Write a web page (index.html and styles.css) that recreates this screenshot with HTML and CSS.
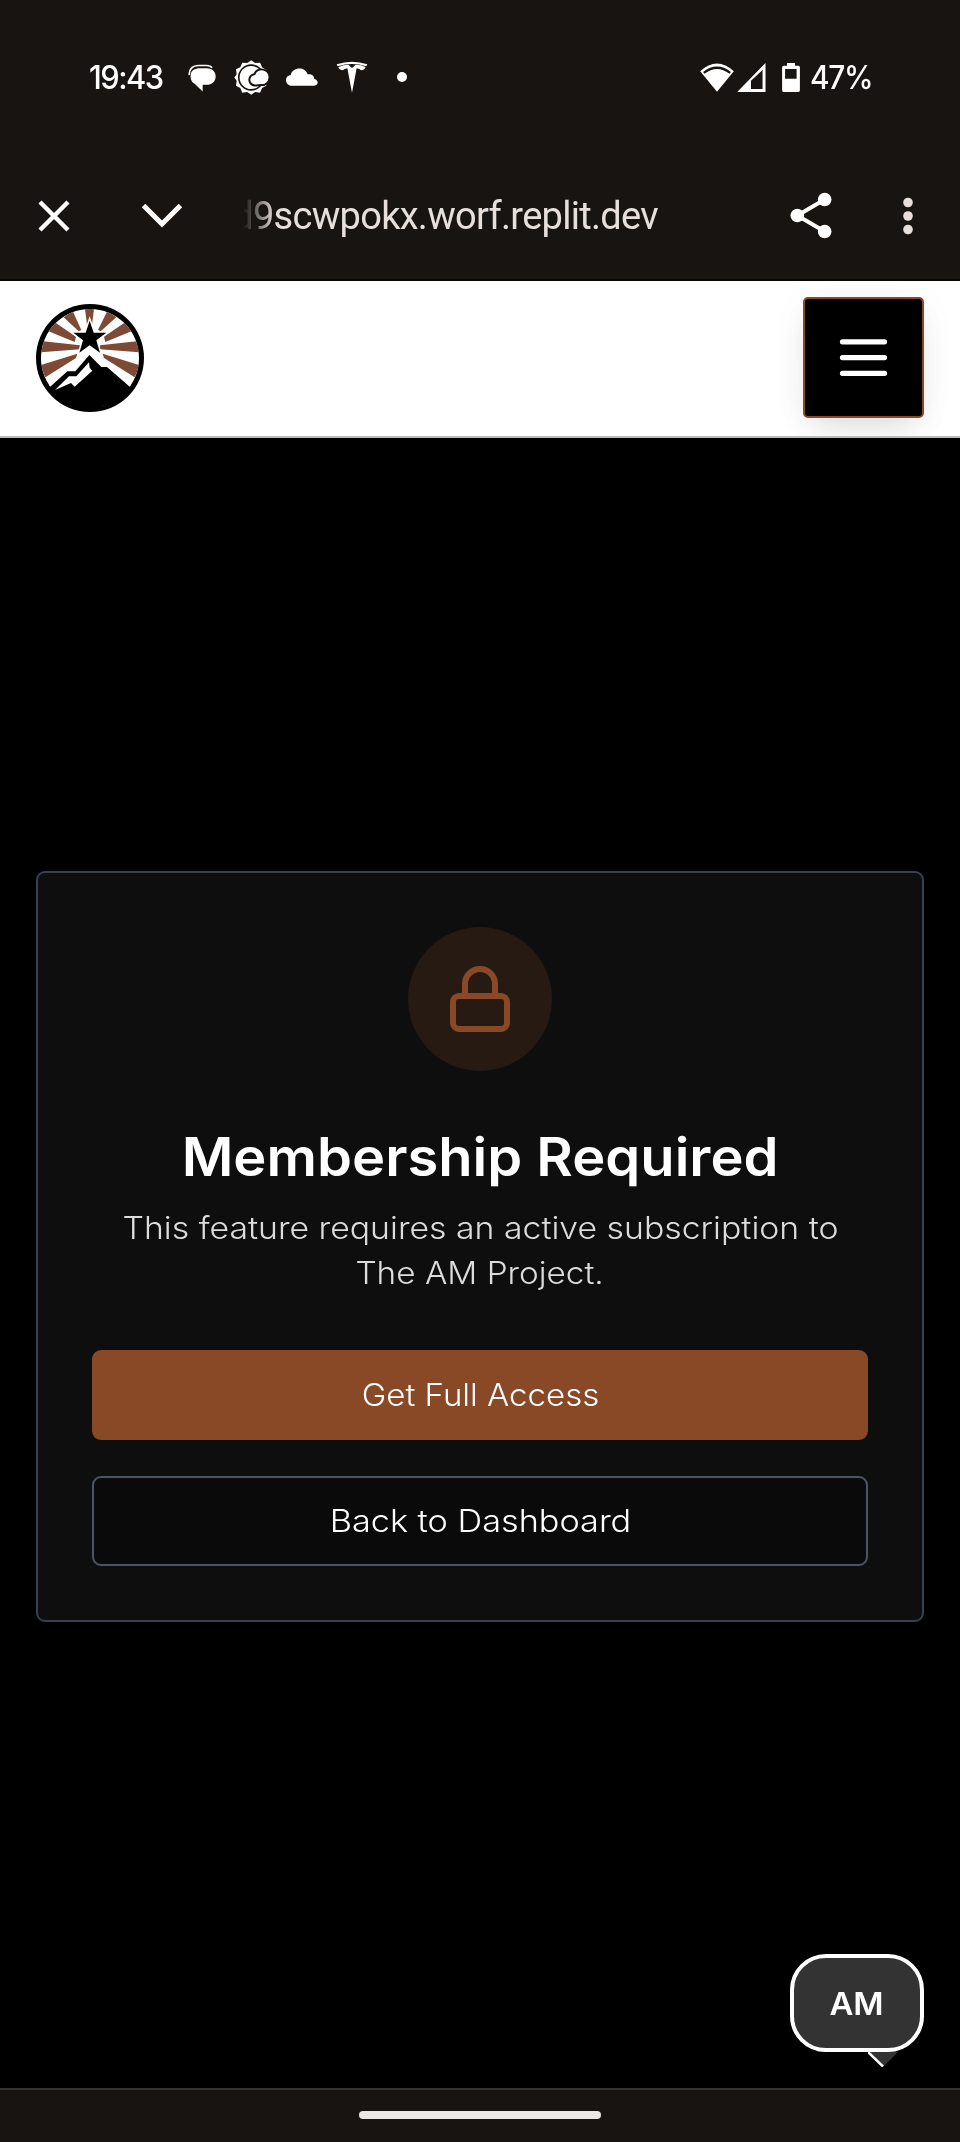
FILE: index.html
```html
<!DOCTYPE html>
<html lang="en">
<head>
<meta charset="utf-8">
<title>Membership Required</title>
<link rel="stylesheet" href="styles.css">
</head>
<body>
<div class="screen">
  <div class="status">
    <div class="status-left">
      <span class="clock">19:43</span>
      <svg class="i-msg" viewBox="384 72 84 86"><path fill="#fff" d="M428 157L404 134C394 128 391 118 392 108C392 94 404 87 420 87H440C456 87 467 97 467 111C467 127 456 137 440 137H428Z"/><path fill="none" stroke="#fff" stroke-width="5" d="M388 108C386 90 398 79 416 79H440Q452 79 456 86"/></svg>
      <svg class="i-weather" viewBox="523 61 106 106"><g fill="#fff"><path d="M575 62L587 70 602 69 608 83 621 91 619 106 626 114 619 124 621 139 608 146 602 160 587 158 575 166 563 158 548 160 542 146 529 139 531 124 524 114 531 104 529 89 542 83 548 69 563 70Z"/><circle cx="575" cy="114" r="40" fill="#171411"/><circle cx="575" cy="114" r="35"/><path stroke="#171411" stroke-width="6" d="M588 138A17 17 0 0 1 585 104Q590 90 607 90C622 90 630 101 630 113C630 126 621 137 607 137Z"/><path d="M588 134A14 14 0 0 1 588 107Q593 93 607 93C619 93 627 102 627 113C627 125 619 134 607 134Z"/></g></svg>
      <svg class="i-cloud" viewBox="678 82 96 54"><path fill="#fff" d="M696 135C673 135 673 104 692 104C696 79 735 76 743 101C757 99 763 107 763 115C777 118 776 135 762 135Z"/></svg>
      <svg class="i-tesla" viewBox="829 64 96 96"><g fill="#fff"><path d="M831 74Q877 59 923 74L920 80Q877 66 834 80Z"/><path d="M836 82Q852 75 866 75L877 85L888 75Q904 75 918 82Q914 92 904 92Q901 87 891 86L877 159L863 86Q853 87 850 92Q840 92 836 82Z"/></g></svg>
      <span class="more-dot"></span>
    </div>
    <div class="status-right">
      <svg class="i-wifi" viewBox="60 66 102 88"><path fill="#fff" d="M111 153L60 91Q111 44 162 91Z"/><path fill="none" stroke="#171411" stroke-width="7" d="M71 96Q111 65 151 96"/></svg>
      <svg class="i-signal" viewBox="171 67 87 88"><path fill="#fff" fill-rule="evenodd" d="M171 155L257 67V155ZM213 121V146H248V88Z"/></svg>
      <svg class="i-battery" viewBox="306 66 54 88"><path fill="#fff" fill-rule="evenodd" d="M321 66H345V74H355Q360 74 360 79V149Q360 154 355 154H311Q306 154 306 149V79Q306 74 311 74H321ZM315 84V114H350V84Z"/></svg>
      <span class="percent">47%</span>
    </div>
  </div>

  <div class="browser-bar">
    <svg class="i-close" viewBox="0 0 32 32"><path d="M2 2L30 30M30 2L2 30"/></svg>
    <svg class="i-down" viewBox="0 0 40 24"><path d="M1.500 1.500L20 20L38.500 1.500"/></svg>
    <div class="url"><span>d9scwpokx.worf.replit.dev</span></div>
    <svg class="i-share" viewBox="930 68 126 140"><g fill="#fff"><path d="M1034 90L952 138L1034 186" fill="none" stroke="#fff" stroke-width="12"/><circle cx="1034" cy="90" r="20.500"/><circle cx="952" cy="138" r="20.500"/><circle cx="1034" cy="186" r="20.500"/></g></svg>
    <svg class="i-kebab" viewBox="0 0 10 38"><circle cx="5" cy="5.500" r="4.800"/><circle cx="5" cy="19" r="4.800"/><circle cx="5" cy="32.500" r="4.800"/></svg>
  </div>

  <header class="site-header">
    <svg class="logo" viewBox="48 42 324 324">
      <defs><clipPath id="disc"><circle cx="210" cy="204" r="147"/></clipPath></defs>
      <circle cx="210" cy="204" r="162"/>
      <circle cx="210" cy="204" r="147" fill="#fff"/>
      <g clip-path="url(#disc)">
        <g fill="#7d4a35">
          <path d="M194 50H223L214 120H203Z"/>
          <path d="M131 82L158 63L184 120L176 124Z"/><path d="M289 82L262 63L234 120L242 124Z"/>
          <path d="M82 122L100 94L168 140L164 156Z"/><path d="M338 122L320 94L252 140L256 156Z"/>
          <path d="M60 187V153L180 166V178Z"/><path d="M360 187V153L240 166V178Z"/>
          <path d="M76 262L60 226L172 191L168 204Z"/><path d="M344 262L360 226L248 191L252 204Z"/>
        </g>
        <path d="M209 92L221 128H259L229 151L240 188L209 166L178 188L189 151L160 128H197Z" stroke="#fff" stroke-width="9"/>
        <path fill="#fff" d="M86 288L132 230L158 228L208 174L248 216L268 220L336 288L260 320H120Z"/>
        <path d="M209 92L221 128H259L229 151L240 188L209 166L178 188L189 151L160 128H197Z"/>
      </g>
      <path d="M84 296L142 244H166L208 195L244 231H261L336 296L300 330L210 360L110 330Z"/>
      <path fill="#fff" d="M105 300L147 259H169L207 217L209 233L217 242L164 290L153 279Z"/>
    </svg>
    <button class="menu" aria-label="Menu"><svg viewBox="0 0 24 24"><path d="M4 6h16M4 12h16M4 18h16"/></svg></button>
  </header>

  <main class="page">
    <section class="card">
      <div class="lock"><svg viewBox="0 0 24 24"><rect x="3" y="11" width="18" height="11" rx="2"/><path d="M7 11V7a5 5 0 0 1 10 0v4"/></svg></div>
      <h1 class="title">Membership Required</h1>
      <p class="desc"><span class="line-a">This feature requires an active subscription to</span><br><span class="line-b">The AM Project.</span></p>
      <button class="btn primary"><span>Get Full Access</span></button>
      <button class="btn outline"><span>Back to Dashboard</span></button>
    </section>
    <div class="bubble"><span>AM</span>
      <svg class="tail" viewBox="0 0 30 15"><path fill="#333" d="M0 0H30L15 15Z"/><path fill="none" stroke="#fff" stroke-width="2.500" d="M0 0L15 14.500"/></svg>
    </div>
  </main>

  <footer class="gesture"><span class="pill"></span></footer>
</div>
</body>
</html>
```
FILE: styles.css
```css
* { box-sizing: border-box; }
body { margin: 0; background: #000; font-family: Inter, "Liberation Sans", sans-serif; }
svg { display: block; flex: none; }
button { font: inherit; cursor: pointer; }
.screen { width: 960px; height: 2142px; display: flex; flex-direction: column; background: #000; overflow: hidden; }

.status { height: 154px; background: #171411; display: flex; justify-content: space-between; padding: 0 89px; color: #fff; }
.status-left, .status-right { display: flex; align-items: center; height: 154px; }
.clock, .percent { font: 500 32px/40px Inter, sans-serif; white-space: nowrap; padding-top: 1px; }
.clock { width: 74px; letter-spacing: -1.6px; transform: scaleX(.965); transform-origin: 0 50%; }
.percent { width: 61px; margin-left: 10px; letter-spacing: -1.4px; transform: scaleX(.93); transform-origin: 0 50%; }
.i-msg { width: 28px; height: 29px; margin-left: 25px; }
.i-weather { width: 35px; height: 35px; margin-left: 18px; }
.i-cloud { width: 32px; height: 18px; margin-left: 17px; }
.i-tesla { width: 32px; height: 32px; margin-left: 18px; }
.more-dot { width: 10px; height: 10px; border-radius: 50%; background: #fff; margin-left: 29px; }
.i-wifi { width: 34px; height: 29px; }
.i-signal { width: 29px; height: 29px; margin-left: 3px; }
.i-battery { width: 18px; height: 29px; margin-left: 16px; }

.browser-bar { height: 127px; background: #171411; border-bottom: 2px solid #080604; display: flex; align-items: center; padding: 0 47px 2px 38px; }
.i-close { width: 32px; height: 32px; fill: none; stroke: #fff; stroke-width: 4.4; }
.i-down { width: 40px; height: 24px; margin-left: 72px; fill: none; stroke: #fff; stroke-width: 5; }
.url { width: 415px; margin-left: 61px; display: flex; justify-content: flex-end; overflow: hidden; color: #e8dfdb; font: 400 38px/52px Roboto, sans-serif; letter-spacing: -.7px; white-space: nowrap; -webkit-mask-image: linear-gradient(90deg, transparent, #000 32px); mask-image: linear-gradient(90deg, transparent, #000 32px); }
.i-share { width: 42px; height: 47px; margin-left: 132px; }
.i-kebab { width: 10px; height: 38px; margin-left: 71px; fill: #e8dfdb; }

.site-header { height: 157px; background: #fff; border-bottom: 2px solid #bbb; display: flex; justify-content: space-between; align-items: center; padding: 0 36px 2px; overflow: hidden; }
.logo { width: 108px; height: 108px; }
.menu { width: 121px; height: 121px; padding: 0; background: #000; border: 2px solid #8a4926; border-radius: 5px; display: flex; align-items: center; justify-content: center; box-shadow: 0 15px 30px -9px rgba(0,0,0,.13), 0 4px 40px rgba(0,0,0,.04); }
.menu svg { width: 63px; height: 63px; fill: none; stroke: #fff; stroke-width: 2; stroke-linecap: round; }

.page { height: 1650px; position: relative; display: flex; align-items: center; padding: 0 36px; }
.card { width: 888px; height: 751px; margin-top: -33px; border: 2px solid #374151; border-radius: 9px; background: #0e0e0e; padding: 54px; display: flex; flex-direction: column; align-items: center; }
.lock { width: 144px; height: 144px; border-radius: 50%; background: #271a13; display: flex; align-items: center; justify-content: center; }
.lock svg { width: 72px; height: 72px; fill: none; stroke: #8a4926; stroke-width: 2; stroke-linecap: round; stroke-linejoin: round; }
.title { margin: 54px 0 0; height: 64px; color: #fff; font-weight: 600; font-size: 53px; line-height: 64px; white-space: nowrap; transform: scaleX(1.058); }
.desc { margin: 16px 0 0; color: #dcdcdc; text-align: center; font-size: 31px; font-weight: 300; line-height: 45px; white-space: nowrap; }
.desc span, .btn span, .bubble span { display: inline-block; }
.line-a { transform: scaleX(1.09); }
.line-b { transform: scaleX(1.074); }
.btn { width: 776px; height: 90px; flex: none; border-radius: 9px; color: #fff; font-size: 31px; font-weight: 300; padding: 0 0 2px; }
.primary { margin-top: 55px; background: #8a4926; border: 0; }
.primary span { transform: scaleX(1.065); }
.outline { margin-top: 36px; background: #0a0a0a; border: 2px solid #4b5563; }
.outline span { transform: scaleX(1.105); }

.bubble { position: absolute; right: 36px; bottom: 36px; width: 134px; height: 98px; border: 4px solid #fff; border-radius: 36px; background: #333; color: #fff; display: flex; align-items: center; justify-content: center; font-size: 31px; font-weight: 600; }
.bubble > span { transform: scaleX(1.06); }
.tail { position: absolute; left: 74px; top: 94px; width: 30px; height: 15px; }

.gesture { height: 54px; background: #171411; border-top: 2px solid #363432; display: flex; justify-content: center; padding-top: 21px; }
.pill { width: 242px; height: 8px; border-radius: 4px; background: #ece8e5; }
```
